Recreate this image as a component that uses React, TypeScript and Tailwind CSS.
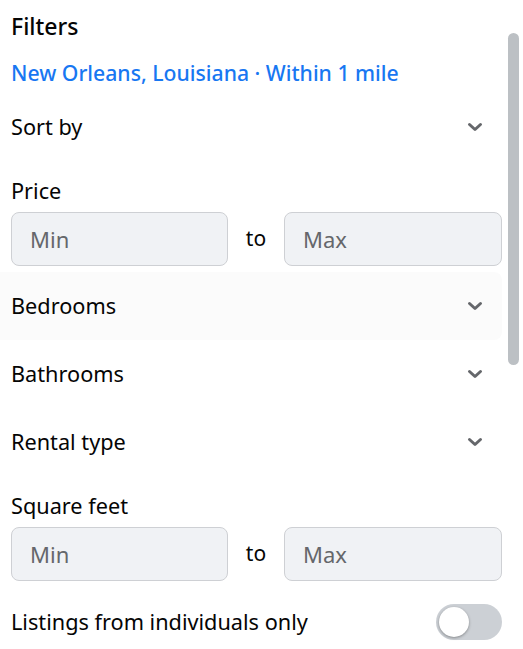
const font = { fontFamily: '"Segoe UI", "Noto Sans", "Open Sans", sans-serif' };

function Chevron() {
  return (
    <svg width="18" height="18" viewBox="0 0 18 18" className="mr-[18px]">
      <path
        d="M3.5 6.5 L9 11.5 L14.5 6.5"
        fill="none"
        stroke="#65676b"
        strokeWidth="3"
        strokeLinecap="round"
        strokeLinejoin="round"
      />
    </svg>
  );
}

function Dropdown({ label, hover = false }: { label: string; hover?: boolean }) {
  return (
    <div
      className={`flex h-[68px] items-center justify-between rounded-r-lg pl-[11px] ${
        hover ? "bg-[#fbfbfb]" : ""
      }`}
    >
      <span className="text-[21.7px] leading-[26px] text-[#050505]">{label}</span>
      <Chevron />
    </div>
  );
}

function RangeInputs() {
  return (
    <div className="flex items-center pl-[11px]">
      <div className="flex h-[54px] w-[217px] items-center rounded-lg border border-[#ced0d4] bg-[#f0f2f5] px-[18px] text-[22px] text-[#65676b]">
        Min
      </div>
      <span className="w-[56px] text-center text-[21px] text-[#050505]">to</span>
      <div className="flex h-[54px] w-[218px] items-center rounded-lg border border-[#ced0d4] bg-[#f0f2f5] px-[18px] text-[22px] text-[#65676b]">
        Max
      </div>
    </div>
  );
}

function RangeSection({ label }: { label: string }) {
  return (
    <div className="pt-[17px]">
      <div className="mb-[8px] pl-[11px] text-[21.7px] leading-[26px] text-[#050505]">
        {label}
      </div>
      <RangeInputs />
    </div>
  );
}

export default function App() {
  return (
    <div className="flex h-[649px] w-[523px] overflow-hidden bg-white" style={font}>
      <div className="w-[502px] shrink-0">
        <div className="pl-[11px] pt-[12px] text-[23px] font-medium leading-[28px] text-[#050505]">
          Filters
        </div>
        <div className="mt-[20px] pl-[11px] text-[21.2px] font-medium leading-[26px] text-[#1877f2]">
          New Orleans, Louisiana · Within 1 mile
        </div>
        <div className="mt-[7px]">
          <Dropdown label="Sort by" />
        </div>
        <RangeSection label="Price" />
        <div className="mt-[6px]">
          <Dropdown label="Bedrooms" hover />
          <Dropdown label="Bathrooms" />
          <Dropdown label="Rental type" />
        </div>
        <RangeSection label="Square feet" />
        <div className="mt-[23px] flex items-center justify-between pl-[11px]">
          <span className="text-[21.7px] leading-[26px] text-[#050505]">
            Listings from individuals only
          </span>
          <div className="flex h-[36px] w-[66px] items-center rounded-full bg-[#ccd0d5] px-[3px]">
            <div className="h-[30px] w-[30px] rounded-full bg-white shadow-[0_1px_3px_rgba(0,0,0,0.35)]" />
          </div>
        </div>
      </div>
      <div className="flex-1 pl-[6px] pt-[33px]">
        <div className="h-[332px] w-[11px] rounded-full bg-[#bcc0c4]" />
      </div>
    </div>
  );
}
